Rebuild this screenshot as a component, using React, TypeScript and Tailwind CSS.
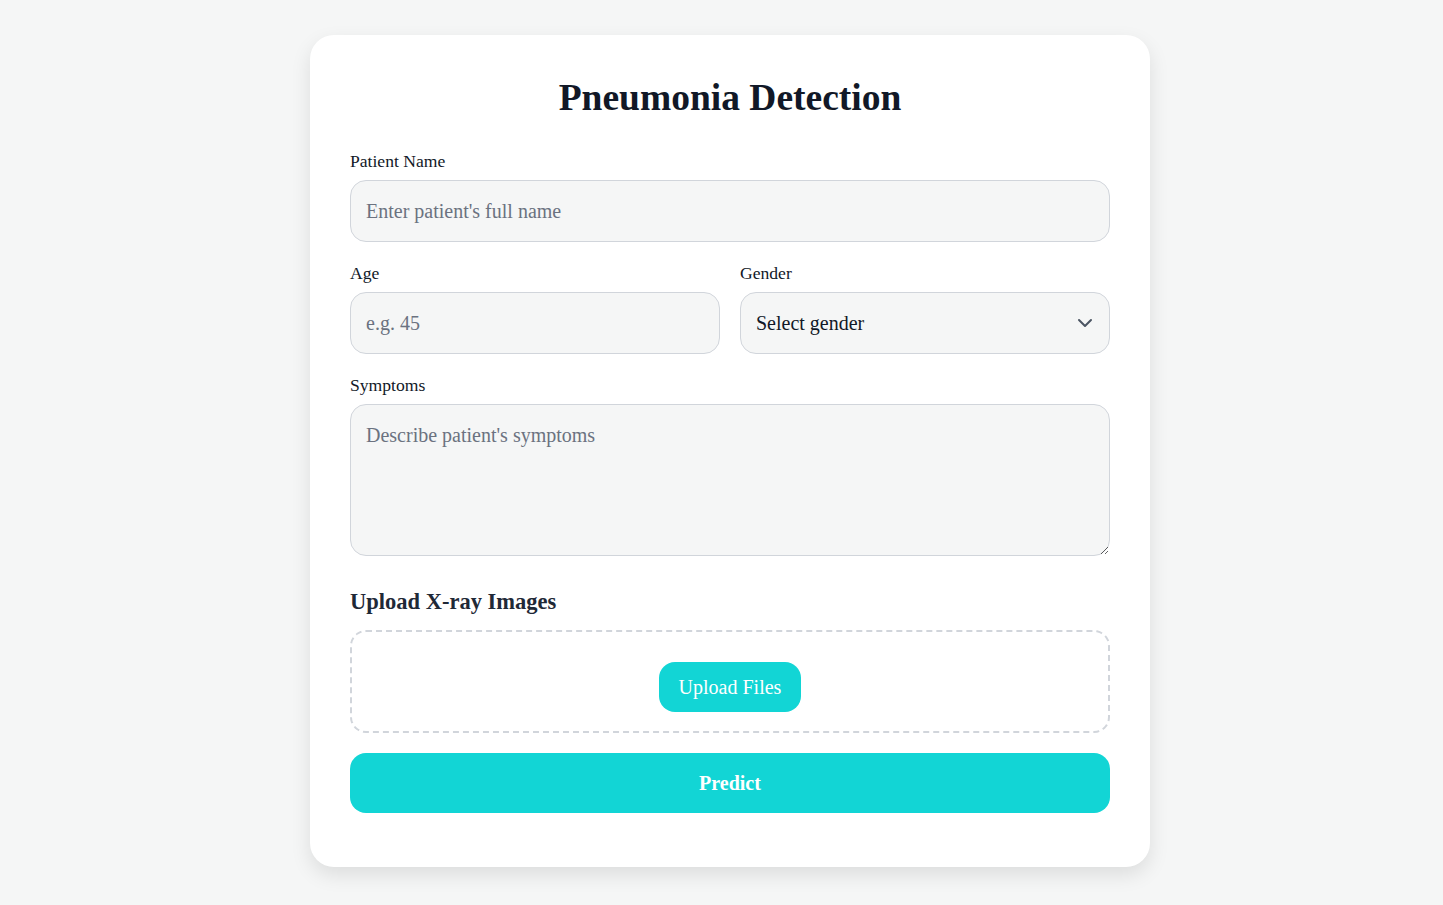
import { ChevronDown } from "lucide-react";

export default function App() {
  return (
    <div
      className="min-h-screen bg-[#f5f6f6] flex justify-center pl-[17px] pt-[35px] pb-10"
      style={{ fontFamily: '"Liberation Serif", "Times New Roman", serif' }}
    >
      <div className="w-[840px] bg-white rounded-[24px] shadow-[0_8px_20px_rgba(0,0,0,0.1)] px-10 pt-10 pb-[54px]">
        <h1 className="text-[37.5px] leading-[44px] font-bold text-[#111827] text-center mt-px mb-[30px]">
          Pneumonia Detection
        </h1>

        <div className="flex flex-col">
          <label className="text-[17.6px] leading-[22px] text-[#111827] mb-2">Patient Name</label>
          <input
            type="text"
            placeholder="Enter patient's full name"
            className="h-[62px] w-full rounded-2xl border border-[#d1d5db] bg-[#f5f6f6] px-[15px] text-[20px] text-[#111827] placeholder:text-[#6b7280] outline-none"
          />
        </div>

        <div className="grid grid-cols-2 gap-5 mt-5">
          <div className="flex flex-col">
            <label className="text-[17.6px] leading-[22px] text-[#111827] mb-2">Age</label>
            <input
              type="text"
              placeholder="e.g. 45"
              className="h-[62px] w-full rounded-2xl border border-[#d1d5db] bg-[#f5f6f6] px-[15px] text-[20px] text-[#111827] placeholder:text-[#6b7280] outline-none"
            />
          </div>
          <div className="flex flex-col">
            <label className="text-[17.6px] leading-[22px] text-[#111827] mb-2">Gender</label>
            <div className="relative">
              <select className="h-[62px] w-full appearance-none rounded-2xl border border-[#d1d5db] bg-[#f5f6f6] px-[15px] text-[20px] text-[#111827] outline-none">
                <option>Select gender</option>
                <option>Male</option>
                <option>Female</option>
                <option>Other</option>
              </select>
              <ChevronDown
                className="pointer-events-none absolute right-[13px] top-1/2 -translate-y-1/2 w-6 h-6 text-[#4b5563]"
                strokeWidth={2}
              />
            </div>
          </div>
        </div>

        <div className="flex flex-col mt-5">
          <label className="text-[17.6px] leading-[22px] text-[#111827] mb-2">Symptoms</label>
          <textarea
            placeholder="Describe patient's symptoms"
            className="h-[152px] w-full rounded-2xl border border-[#d1d5db] bg-[#f5f6f6] px-[15px] py-4 text-[20px] leading-7 text-[#111827] placeholder:text-[#6b7280] outline-none"
          />
        </div>

        <h2 className="text-[22.5px] leading-7 font-bold text-[#1f2937] mt-8 mb-[14px]">
          Upload X-ray Images
        </h2>

        <div className="h-[103px] rounded-2xl border-2 border-dashed border-[#d1d5db] flex items-center justify-center pt-[10px]">
          <button className="h-[50px] px-5 rounded-2xl bg-[#12d5d5] text-white text-[20px]">
            Upload Files
          </button>
        </div>

        <button className="mt-5 h-[60px] w-full rounded-2xl bg-[#12d5d5] text-white text-[20px] font-bold">
          Predict
        </button>
      </div>
    </div>
  );
}
